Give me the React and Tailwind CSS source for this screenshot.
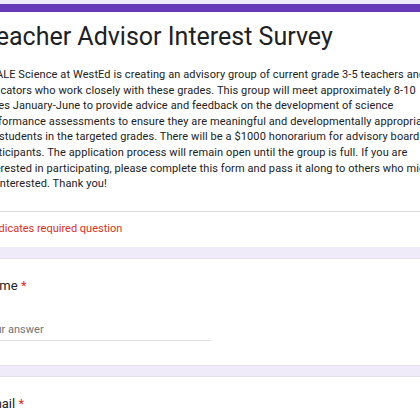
import React from 'react';

const intro = [
  'SCALE Science at WestEd is creating an advisory group of current grade 3-5 teachers and',
  'educators who work closely with these grades. This group will meet approximately 8-10',
  'times January-June to provide advice and feedback on the development of science',
  'performance assessments to ensure they are meaningful and developmentally appropriate',
  'for students in the targeted grades. There will be a $1000 honorarium for advisory board',
  'participants. The application process will remain open until the group is full. If you are',
  'interested in participating, please complete this form and pass it along to others who might',
  'be interested. Thank you!'
];

const Question = ({ label, answer }) => (
  <div className="bg-white rounded-lg border border-[#e3e0ea] px-[24px] pt-[18px] pb-[24px]">
    <div className="text-[13px] leading-[18px] text-[#202124]">
      {label} <span className="text-[#d93025]">*</span>
    </div>
    {answer && (
      <div className="mt-[27px] w-[228px] border-b border-[#e0e0e0] pb-[3px] text-[11px] leading-[15px] text-[#70757a]">
        Your answer
      </div>
    )}
  </div>
);

export default function App() {
  return (
    <div
      className="w-[420px] h-[420px] overflow-hidden bg-[#f0ebf8]"
      style={{ fontFamily: 'Roboto, "Noto Sans", sans-serif' }}
    >
      <div className="ml-[-42px] w-[640px] pt-[4px] flex flex-col gap-[10px]">
        {/* Header card */}
        <div className="bg-white rounded-lg border-t-[8px] border-[#673ab7] overflow-hidden mb-[1px]">
          <div className="px-[24px] pt-[10px]">
            <h1 className="text-[25px] leading-[30px] text-[#202124]">Teacher Advisor Interest Survey</h1>
            <div className="mt-[15px] text-[11px] leading-[15.6px] text-[#202124] tracking-[0.1px]">
              {intro.map((line) => (
                <div key={line} className="whitespace-nowrap">{line}</div>
              ))}
            </div>
          </div>
          <div className="mt-[19px] border-t border-[#dadce0]" />
          <div className="px-[24px] pt-[9px] pb-[11px] text-[11px] leading-[15.6px] text-[#d93025]">
            * Indicates required question
          </div>
        </div>

        <Question label="Name" answer />
        <Question label="Email" answer />
      </div>
    </div>
  );
}
